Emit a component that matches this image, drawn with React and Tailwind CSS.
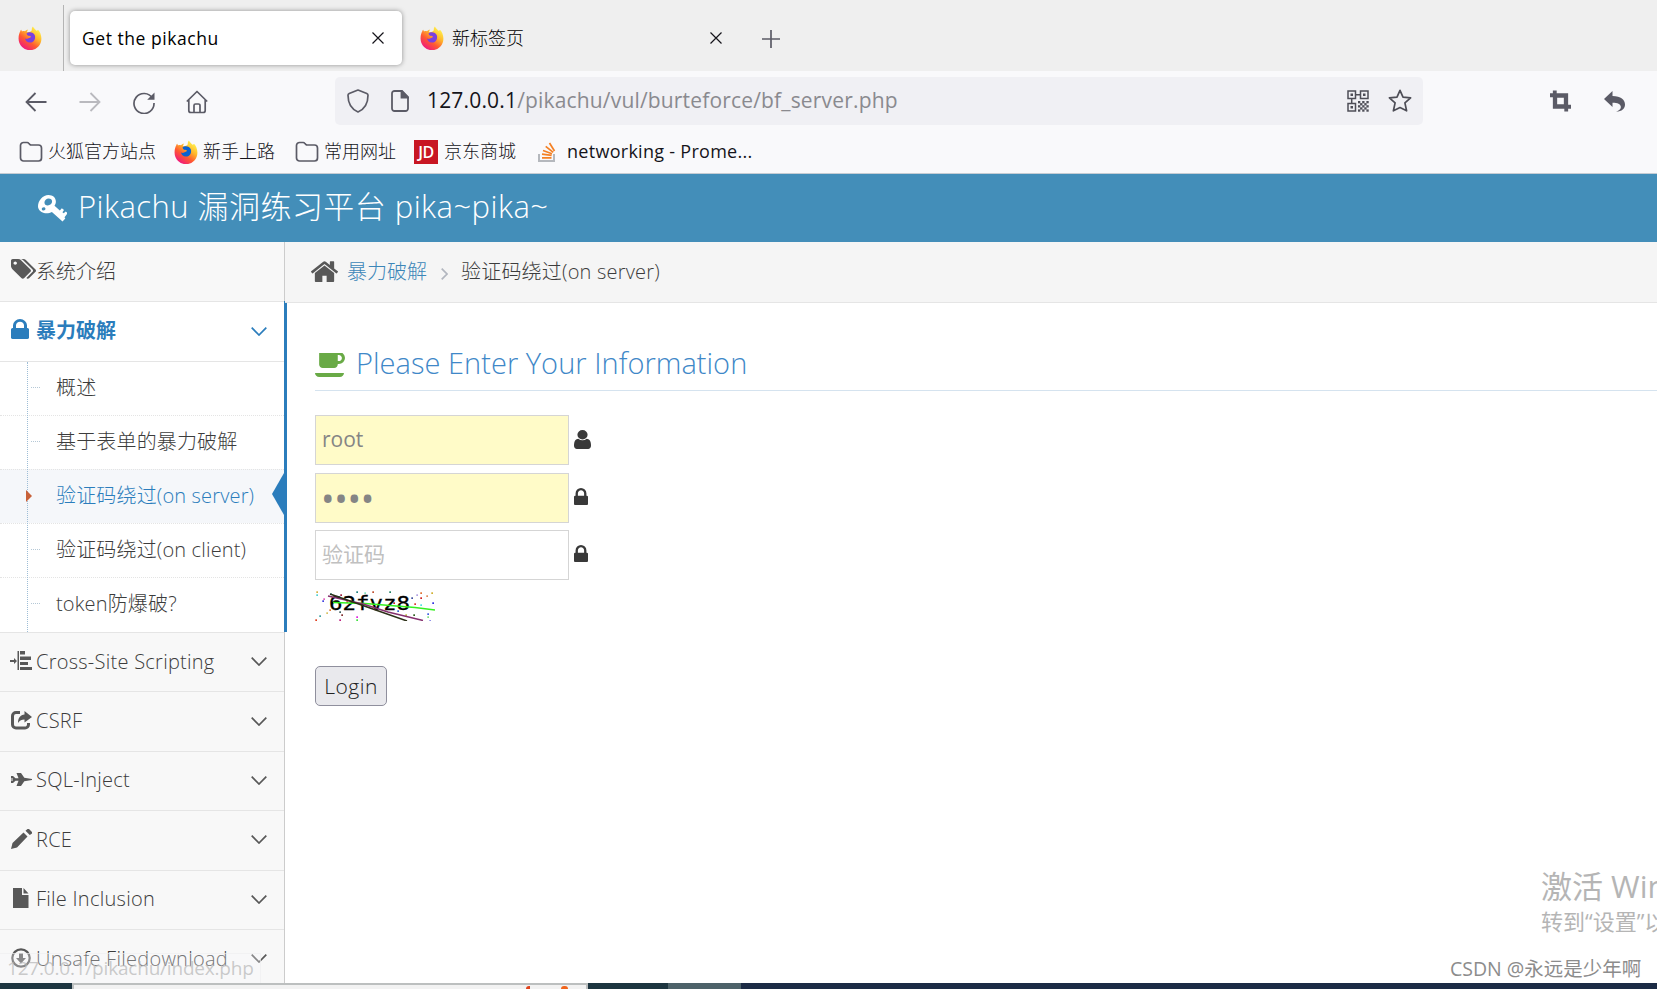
import { useState } from "react";

// Font Awesome glyphs, most of them on the 1792 grid
const PATHS = {
  key: "M10.500 0C15 0 18 2.800 18 6.500c0 1.600-.5 3-1.400 4.300l5.400 4.700 2-2.300 2.200 1.800-1.600 2.200 1.300 1 2-1.800 2 1.800-3.200 4 .8 1.200-2.800 3.200L14 17c-2 1-5 1.800-8 1C2.500 17 0 14.500 0 11.300 0 5.500 5 0 10.500 0zM10.700 3.500C8.500 3.500 6.500 5.300 6.500 7.500c0 1.800 1.300 3 3.300 3 2.400 0 4.400-1.700 4.400-3.900 0-1.800-1.400-3.100-3.500-3.100zM5.800 12.200c-1.100 0-2 .8-2 1.800s.9 1.500 1.900 1.500 1.800-.7 1.800-1.700-.7-1.600-1.700-1.600z",
  tags: "M448 448q0-53-37.5-90.5t-90.5-37.5-90.5 37.5-37.5 90.5 37.5 90.5 90.5 37.5 90.5-37.5 37.5-90.5zm1067 576q0 53-37 90l-491 492q-39 37-91 37-53 0-90-37l-715-716q-38-37-64.5-101t-26.5-117v-416q0-52 38-90t90-38h416q53 0 117 26.5t102 64.5l715 714q37 39 37 91zm384 0q0 53-37 90l-491 492q-39 37-91 37-36 0-59-14t-53-45l470-470q37-37 37-90 0-52-37-91l-715-714q-38-38-102-64.5t-117-26.5h224q53 0 117 26.5t102 64.5l715 714q37 39 37 91z",
  lock: "M640 768h512v-192q0-106-75-181t-181-75-181 75-75 181v192zm832 96v576q0 40-28 68t-68 28h-960q-40 0-68-28t-28-68v-576q0-40 28-68t68-28h32v-192q0-184 132-316t316-132 316 132 132 316v192h32q40 0 68 28t28 68z",
  home: "M1472 992v480q0 26-19 45t-45 19h-384v-384h-256v384h-384q-26 0-45-19t-19-45v-480q0-1 .5-3t.5-3l575-474 575 474q1 2 1 6zm223-69l-62 74q-8 9-21 11h-3q-13 0-21-7l-692-577-692 577q-12 8-24 7-13-2-21-11l-62-74q-8-10-7-23.5t11-21.5l719-599q32-26 76-26t76 26l244 204v-195q0-14 9-23t23-9h192q14 0 23 9t9 23v408l219 182q10 8 11 21.5t-7 23.5z",
  coffee: "M1664 448q0-80-56-136t-136-56h-64v384h64q80 0 136-56t56-136zm-1664 960h1792q0 106-75 181t-181 75h-1280q-106 0-181-75t-75-181zm1856-960q0 159-112.5 271.5t-271.5 112.5h-64v32q0 92-66 158t-158 66h-704q-92 0-158-66t-66-158v-736q0-26 19-45t45-19h1152q159 0 271.5 112.5t112.5 271.5z",
  user: "M1536 1399q0 109-62.5 187t-150.5 78h-854q-88 0-150.5-78t-62.5-187q0-85 8.5-160.5t31.5-152 58.5-131 94-89 134.5-34.5q131 128 313 128t313-128q76 0 134.5 34.5t94 89 58.5 131 31.5 152 8.5 160.5zm-256-887q0 159-112.5 271.5t-271.5 112.5-271.5-112.5-112.5-271.5 112.5-271.5 271.5-112.5 271.5 112.5 112.5 271.5z",
};

function Fa({ name, box = "0 0 1792 1792", className }) {
  return (
    <svg viewBox={box} fill="currentColor" fillRule={name === "key" ? "evenodd" : "nonzero"} preserveAspectRatio="none" className={`shrink-0 ${className}`}>
      <path d={PATHS[name]} />
    </svg>
  );
}

function Firefox({ core = "#7a3fe0", className = "" }) {
  const id = core.slice(1);
  return (
    <svg viewBox="0 0 24 24" className={`w-6 h-6 shrink-0 ${className}`}>
      <defs>
        <linearGradient id={`fx${id}`} x1="0.85" y1="0.1" x2="0.25" y2="0.95">
          <stop offset="0" stopColor="#fff44f" />
          <stop offset="0.35" stopColor="#ffb62c" />
          <stop offset="0.65" stopColor="#ff5a30" />
          <stop offset="1" stopColor="#f0197d" />
        </linearGradient>
      </defs>
      <path
        fill={`url(#fx${id})`}
        d="M14.9.4c1 2 2.200 2.700 3.600 4.300 1.200-.1 1.500-.8 1.700-.6 1.700 1.700 3.200 4.900 3.200 8.500A11.400 11.400 0 0 1 .6 13C.4 10 1.300 7 2.300 5.300c.2-.5.6-1.700.9-1.500.4.7.6 1.300.8 1.600 1.200-.7 2.300-.4 2.900-.2.9-1 2.200-1.700 3.300-1.500-1 1-1.300 1.700-1 2.400 2.500.2 4.900-.8 4.600-2.600-.1-1.200.2-2.300 1.100-3.100z"
      />
      <path fill={core} d="M8.500 7.500c2-2 7-1.700 8.300 1.700 1.200 3.600-1 7.300-4.600 7.400-3 .1-5-1.900-5.100-4.100 1.500.8 3 .4 4.100-.4.700-.5 1.600-.8 1.700-1.400 0-.6-1.600-.7-2.600-.9-.7-.2-1.600-1.300-1.800-2.300z" />
    </svg>
  );
}

function Folder() {
  return (
    <svg viewBox="0 0 24 22" fill="none" stroke="#5b5b66" strokeWidth="1.7" className="w-6 h-[22px] shrink-0">
      <path d="M1.500 4.500a3 3 0 0 1 3-3h3.700a2 2 0 0 1 1.500.7l1.100 1.200a2 2 0 0 0 1.500.6h7.200a3 3 0 0 1 3 3v10a3 3 0 0 1-3 3h-15a3 3 0 0 1-3-3z" />
    </svg>
  );
}

function Close({ className = "" }) {
  return (
    <svg viewBox="0 0 12 12" stroke="#15141a" strokeWidth="1.200" className={`w-3 h-3 ${className}`}>
      <path d="M.5.5l11 11M11.500.5l-11 11" />
    </svg>
  );
}

function TabStrip() {
  return (
    <div className="h-[71px] bg-[#efefef] flex items-center text-[17.5px] text-black">
      <Firefox className="ml-[18px] mt-[4px]" />
      <div className="w-px h-[66px] mt-[5px] bg-[#b4b4b4] ml-[21px]" />
      <div className="ml-[6px] mt-[5px] w-[332px] h-[54px] bg-white rounded-[5px] shadow-[0_0_5px_rgba(0,0,0,0.4)] flex items-center pl-3 pr-[18px]">
        <span className="tracking-[0.55px]">Get the pikachu</span>
        <Close className="ml-auto" />
      </div>
      <Firefox className="ml-[18px] mt-[4px]" />
      <span className="ml-[8px] text-[18px] mt-[6px] font-light">新标签页</span>
      <Close className="ml-[186px] mt-[5px]" />
      <svg viewBox="0 0 18 18" stroke="#5b5b66" strokeWidth="1.700" className="w-[18px] h-[18px] ml-[40px] mt-[6px]">
        <path d="M9 0v18M0 9h18" />
      </svg>
    </div>
  );
}

function QrIcon() {
  const dots = [];
  for (let r = 0; r < 5; r++) {
    for (let c = 0; c < 5; c++) {
      if ((r + c) % 2 === 0) dots.push([11 + c * 2.1, 11 + r * 2.1]);
    }
  }
  return (
    <svg viewBox="0 0 22 22" fill="none" stroke="#4e4e57" strokeWidth="1.500" className="w-[22px] h-[22px]">
      <path d="M1 1h7.500v7.500H1zM13.500 1H21v7.500h-7.500zM1 13.500h7.500V21H1zM8.500 4.700h5M4.700 8.500v5" />
      <g fill="#4e4e57" stroke="none">
        <path d="M3.500 3.500h2.500v2.500H3.500zM16 3.500h2.500v2.500H16zM3.500 16h2.500v2.500H3.500z" />
        {dots.map(([x, y]) => (
          <rect key={`${x}-${y}`} x={x} y={y} width="2.300" height="2.300" />
        ))}
      </g>
    </svg>
  );
}

function NavBar() {
  return (
    <div className="h-[60px] flex items-center pl-[25px] text-[#5b5b66]">
      <svg viewBox="0 0 22 20" fill="none" stroke="currentColor" strokeWidth="1.800" className="w-[22px] h-5 mt-[2px]">
        <path d="M21.500 10H1.500M10.500 1L1.500 10l9 9" />
      </svg>
      <svg viewBox="0 0 22 20" fill="none" stroke="#b9b9be" strokeWidth="1.800" className="w-[22px] h-5 ml-8 mt-[2px]">
        <path d="M.5 10h20M11.500 1l9 9-9 9" />
      </svg>
      <svg viewBox="0 0 22 22" fill="none" stroke="currentColor" strokeWidth="1.700" className="w-[22px] h-[22px] ml-8 mt-[3px]">
        <path d="M19.500 6.200A10 10 0 1 0 21 11" />
        <path d="M21.500.5v7.300h-7.300z" fill="currentColor" stroke="none" />
      </svg>
      <svg viewBox="0 0 22 24" fill="none" stroke="currentColor" strokeWidth="1.700" strokeLinejoin="round" className="w-[22px] h-6 ml-[31px] mt-px">
        <path d="M.8 11.500L11 1.500l10.200 10M2.800 9.800v10.700a2 2 0 0 0 2 2h12.400a2 2 0 0 0 2-2V9.800M8 22.500v-7a1.500 1.500 0 0 1 1.500-1.500h3a1.500 1.500 0 0 1 1.500 1.500v7" />
      </svg>
      <div className="ml-[127px] w-[1088px] h-12 bg-[#f0f0f4] rounded-[5px] flex items-center pl-3 pr-[11px]">
        <svg viewBox="0 0 22 24" fill="none" stroke="currentColor" strokeWidth="1.700" strokeLinejoin="round" className="w-[22px] h-6">
          <path d="M11 1L19.800 4.500q1.200.5 1.200 1.800C21 14 18 20 11 23 4 20 1 14 1 6.300q0-1.300 1.200-1.800z" />
        </svg>
        <svg viewBox="0 0 18 22" fill="none" stroke="currentColor" strokeWidth="1.800" className="w-[18px] h-[22px] ml-[22px]">
          <path d="M3.500 1h7.500l6 6v11.500a2.500 2.500 0 0 1-2.500 2.500h-11A2.500 2.500 0 0 1 1 18.500v-15A2.500 2.500 0 0 1 3.500 1z" />
          <path d="M10.500 1v6.500H17z" fill="currentColor" />
        </svg>
        <span className="ml-[18px] text-[21px] text-[#8a8a8f] tracking-[0.17px]">
          <span className="text-[#15141a]">127.0.0.1</span>/pikachu/vul/burteforce/bf_server.php
        </span>
        <div className="ml-auto flex items-center gap-[19px]">
          <QrIcon />
          <svg viewBox="0 0 24 24" fill="none" stroke="#4e4e57" strokeWidth="1.700" strokeLinejoin="round" className="w-6 h-6">
            <path d="M12 1.300l3 6.900 7.600.7-5.700 5 1.700 7.900-6.600-3.300-6.600 3.300 1.700-7.900-5.700-5L9 8.200z" />
          </svg>
        </div>
      </div>
      <svg viewBox="0 0 22 22" fill="currentColor" className="w-[21px] h-[22px] ml-[127px]">
        <path d="M3 0h4v3h12v12h3v4h-3v3h-4v-3H3V7H0V3h3zM7.500 7.500v7h7v-7z" fillRule="evenodd" />
      </svg>
      <svg viewBox="0 0 21 21" fill="currentColor" className="w-[21px] h-[21px] ml-[33px]">
        <path d="M8.500 0v5C17 5 21 9 21 13.500c0 4-3 7-9 7.300 4-1.500 5-3.300 4.800-5.300-.3-2.400-3-3.800-8.300-3.800V16L0 8z" />
      </svg>
    </div>
  );
}

function Bookmarks() {
  return (
    <div className="h-[42px] pb-px flex items-center pl-[19px] text-[18px] text-[#15141a] font-light">
      <Folder />
      <span className="ml-[5px]">火狐官方站点</span>
      <Firefox core="#0a62d0" className="ml-[18px]" />
      <span className="ml-[5px]">新手上路</span>
      <span className="ml-[20px] flex"><Folder /></span>
      <span className="ml-[5px]">常用网址</span>
      <span className="ml-[18px] w-6 h-6 bg-[#c81623] text-white text-[16px] font-semibold leading-6 text-center tracking-[-0.5px]">JD</span>
      <span className="ml-[6px]">京东商城</span>
      <svg viewBox="0 0 18 20" fill="none" className="w-[18px] h-5 ml-[22px]">
        <path d="M1 12v7h15v-7" stroke="#b5b8bd" strokeWidth="2" />
        <path d="M4 15.800h9.500M4 12.200l9.600 1.200M5 8.500l9 3.200M7.700 4.300l7.500 6M11.500 1l5 8" stroke="#f48024" strokeWidth="1.700" />
      </svg>
      <span className="ml-[11px] text-[18px] font-normal tracking-[0.28px]">networking - Prome...</span>
    </div>
  );
}

const subItems = ["概述", "基于表单的暴力破解", "验证码绕过(on server)", "验证码绕过(on client)", "token防爆破?"];

const menus = [
  {
    label: "Cross-Site Scripting",
    icon: <path d="M0 9h6v2H0zM4 7l3 3-3 3zM7.500 0h1.500v19H7.500zM10 0h5v3.500h-5zM10 5.500h11V9H10zM10 11h8v3h-8zM10 16h12v3H10z" />,
  },
  {
    label: "CSRF",
    icon: (
      <>
        <path d="M10 2.500H6A3.500 3.500 0 0 0 2.500 6v8.500A3.500 3.500 0 0 0 6 18h9a3.500 3.500 0 0 0 3.500-3.500V13" fill="none" stroke="currentColor" strokeWidth="3" />
        <path d="M14.500 1L22 7l-7.500 5.500V9.500c-3 0-4.500.8-6.500 3.500C8 7.500 10.500 5 14.500 4.500z" />
      </>
    ),
  },
  {
    label: "SQL-Inject",
    icon: <path d="M1 7h2l2.500 2.300h3L6.500 4H11l3.300 4.700 7.700 1.300v1L14.300 12.300 11 17H6.500L8.500 11.700h-3L3 14H1v-2.500h2v-.7H1v-.6h2v-.7H1z" />,
  },
  {
    label: "RCE",
    icon: <path d="M1 20l1.500-6L13.500 3.500l4 4L7 18.500zM15.500 1.800L17.500 0H19l3 3v1.500L19.800 6z" />,
  },
  {
    label: "File Inclusion",
    icon: <path d="M3 0h9v7h6.500v13H3zM13.500 0l5 5.500h-5z" />,
  },
  {
    label: "Unsafe Filedownload",
    icon: (
      <>
        <circle cx="11" cy="10" r="8.700" fill="none" stroke="currentColor" strokeWidth="2.200" />
        <path d="M9 5h4v5h3l-5 5.500L6 10h3z" />
      </>
    ),
  },
];

function Chevron() {
  return (
    <svg viewBox="0 0 16 9" fill="none" stroke="currentColor" strokeWidth="1.700" className="w-4 h-[9px] ml-auto mr-[17px] mb-px">
      <path d="M.7.7L8 8 15.300.7" />
    </svg>
  );
}

function Sidebar() {
  const [active, setActive] = useState(2);
  return (
    <div className="w-[287px] shrink-0 text-[20px] text-[#585858] leading-none">
      <div className="w-[285px] h-[59px] bg-[#f8f8f8] border-r border-[#ccc] flex items-center pl-[11px]">
        <Fa name="tags" box="0 128 1900 1536" className="w-[25px] h-[20px] mb-[6px]" />
        <span className="font-light text-[#3c3c3c]">系统介绍</span>
      </div>
      <div className="border-r-3 border-[#2b7dbc] bg-white">
        <div className="h-[61px] border-y border-[#e5e5e5] flex items-center pl-[11px] text-[#2b7dbc] font-bold">
          <Fa name="lock" box="320 128 1152 1408" className="w-[18px] h-[20px] mb-[5px]" />
          <span className="ml-[7px] pb-[2px]">暴力破解</span>
          <Chevron />
        </div>
        <ul className="relative font-light text-[#3c3c3c]">
          {subItems.map((text, i) => (
            <li
              key={text}
              onClick={() => setActive(i)}
              className={`relative h-[54px] first:h-[53px] last-of-type:h-[55px] flex items-center pl-[56px] pb-[2px] tracking-[0.16px] cursor-pointer ${i > 0 ? "border-t border-dotted border-[#e4e4e4]" : ""} ${i === active ? "bg-[#f5f7fa] text-[#2b7dbc]" : ""}`}
            >
              {i !== active && <span className="absolute left-[31px] top-[25px] w-[9px] border-t border-dotted border-[#b5c8d6]" />}
              {text}
              {i === active && (
                <>
                  <svg viewBox="0 0 6 12" className="absolute left-[26px] top-5 w-[6px] h-3 z-10">
                    <path d="M0 0l6 6-6 6z" fill="#c86139" />
                  </svg>
                  <svg viewBox="0 0 12 42" className="absolute right-0 top-[3px] w-3 h-[42px]">
                    <path d="M12 0v42L0 21z" fill="#2b7dbc" />
                  </svg>
                </>
              )}
            </li>
          ))}
          <span className="absolute left-[27px] top-0 bottom-0 border-l border-dotted border-[#9dbdd6]" />
        </ul>
      </div>
      <div className="w-[285px] border-r border-[#ccc]">
        {menus.map((m) => (
          <div key={m.label} className="h-[59.4px] bg-[#f8f8f8] border-t border-[#e5e5e5] flex items-center pl-[10px]">
            <svg viewBox="0 0 22 20" fill="currentColor" className="w-[22px] h-5 shrink-0 mb-[3px]">{m.icon}</svg>
            <span className="ml-1 pb-px font-light text-[#3c3c3c] tracking-[0.26px]">{m.label}</span>
            <Chevron />
          </div>
        ))}
      </div>
    </div>
  );
}

const specks = [
  [2, 1, "#d8b040"], [16, 3, "#40b0b0"], [42, 1, "#208080"], [58, 1, "#c05030"], [75, 1, "#208060"], [106, 2, "#e07030"],
  [117, 2, "#d0b030"], [2, 4, "#50d0d0"], [9, 8, "#e060c0"], [8, 10, "#4040e0"], [15, 19, "#e08040"], [5, 25, "#40a0a0"],
  [1, 29, "#e04020"], [25, 29, "#c02080"], [27, 24, "#803030"], [42, 26, "#e020e0"], [42, 29, "#40e040"], [26, 4, "#a02040"],
  [102, 4, "#b0a0e0"], [106, 7, "#d02020"], [97, 7, "#4050a0"], [100, 13, "#e03030"], [106, 14, "#50e0e0"], [118, 12, "#3030e0"],
  [112, 5, "#e09060"], [99, 24, "#306020"], [113, 23, "#4060e0"], [115, 30, "#6060e0"], [83, 20, "#3060d0"], [79, 12, "#d02020"],
  [91, 24, "#c0c040"], [32, 11, "#e02020"], [50, 2, "#80e0c0"], [12, 22, "#d8c060"], [113, 26, "#80e080"], [25, 21, "#406060"],
];

function Captcha() {
  return (
    <svg viewBox="0 0 120 30" className="w-[120px] h-[30px] mt-[11px] block">
      {specks.map(([x, y, c], i) => (
        <rect key={i} x={x - 0.7} y={y - 0.7} width="1.700" height="1.700" fill={c} />
      ))}
      <text x="14" y="19" textLength="81" lengthAdjust="spacingAndGlyphs" fontSize="19.500" className="font-['DejaVu_Sans_Mono',monospace]" fill="#000" stroke="#000" strokeWidth="0.3">62fvz8</text>
      <path d="M18 11.500l32 1 50 4 20 2.500" stroke="#35f020" strokeWidth="1.600" fill="none" />
      <path d="M13 5l35 8 25 8 35 8.500" stroke="#85306e" strokeWidth="1.500" fill="none" />
      <path d="M15 3l40 14 37 13" stroke="#2c3018" strokeWidth="1.500" fill="none" />
    </svg>
  );
}

function LoginForm() {
  return (
    <form className="pl-[28px] text-[20px]" onSubmit={(e) => e.preventDefault()}>
      <h4 className="h-[88px] border-b border-[#d5e3ef] flex items-center pt-[32px] text-[29px] font-light text-[#3f88c8]">
        <Fa name="coffee" box="0 128 1856 1536" className="w-[30px] h-6 mt-[5px] text-[#69aa46]" />
        <span className="ml-[11px] whitespace-nowrap tracking-[0.03px]">Please Enter Your Information</span>
      </h4>
      <div className="mt-6 flex items-center text-[#393939]">
        <input defaultValue="root" className="w-[254px] h-[50px] border border-[#d5d5d5] bg-[#fffbc8] px-[6px] pb-[2px] text-[21px] text-[#858585] outline-none" />
        <Fa name="user" box="256 128 1280 1536" className="w-[17px] h-[19px] ml-[5px] mb-px" />
      </div>
      <div className="mt-2 flex items-center text-[#393939]">
        <input type="password" defaultValue="root" className="w-[254px] h-[50px] border border-[#d5d5d5] bg-[#fffbc8] pl-[5px] pt-[2px] text-[36px] tracking-[-0.3px] text-[#858585] outline-none" />
        <Fa name="lock" box="320 128 1152 1408" className="w-[14px] h-[17px] ml-[5px] mb-[4px]" />
      </div>
      <div className="mt-[7px] flex items-center text-[#393939]">
        <input placeholder="验证码" className="w-[254px] h-[50px] border border-[#d5d5d5] bg-white px-[6px] pb-[2px] text-[21px] placeholder:text-[#c0c0c0] outline-none" />
        <Fa name="lock" box="320 128 1152 1408" className="w-[14px] h-[17px] ml-[5px] mb-[4px]" />
      </div>
      <Captcha />
      <button className="mt-[45px] w-[72px] h-10 pt-[2px] border border-[#8f8f9d] rounded-[5px] bg-[#e9e9ed] text-[#222] text-[21px] font-light tracking-[0.5px]">Login</button>
    </form>
  );
}

export default function App() {
  return (
    <div className="relative w-[1657px] h-[989px] overflow-hidden bg-[#f9f9fb] flex flex-col font-['Open_Sans','Noto_Sans_CJK_SC',sans-serif]">
      <TabStrip />
      <NavBar />
      <Bookmarks />
      <header className="h-[69px] border-t border-[#c5ccd3] bg-[#438eb9] flex items-center pl-[38px] text-white text-[31px] font-light">
        <Fa name="key" box="0 0 29.200 27" className="w-[29px] h-[27px]" />
        <span className="ml-[11px] pb-[4px] whitespace-nowrap tracking-[0.45px]">Pikachu 漏洞练习平台 pika~pika~</span>
      </header>
      <div className="h-[741px] flex overflow-hidden bg-white">
        <Sidebar />
        <main className="flex-1 min-w-0">
          <nav className="-ml-[2px] h-[61px] bg-[#f5f5f5] border-b border-[#e5e5e5] flex items-center pl-[26px] text-[20px] font-light text-[#3c3c3c]">
            <Fa name="home" box="90 240 1612 1296" className="w-[27px] h-[21px] mb-px text-[#585858]" />
            <a className="ml-[9px] text-[#3c86b8]">暴力破解</a>
            <svg viewBox="0 0 7 12" fill="none" stroke="#b2b6bf" strokeWidth="1.700" className="w-[7px] h-3 ml-[14px] mt-1">
              <path d="M.7.7L6 6 .7 11.300" />
            </svg>
            <span className="ml-[13px] tracking-[0.2px]">验证码绕过(on server)</span>
          </nav>
          <LoginForm />
        </main>
      </div>
      <footer className="h-[6px] flex bg-[#1d3540]">
        <div className="ml-[72px] w-[516px] bg-[#f2f2f2] border-t-2 border-x-2 border-[#bcbfbf] flex">
          <span className="ml-[452px] mt-px w-[4px] h-[3px] bg-[#e0431c] rounded-tl-full" />
          <span className="ml-[31px] mt-px w-[7px] h-[3px] bg-[#f0641c] rounded-t-full" />
        </div>
        <div className="ml-[80px] w-[73px] bg-[#4d6269]" />
        <div className="flex-1 bg-[#1c2b45]" />
      </footer>

      {/* link preview */}
      <div className="absolute left-0 top-[953px] w-[261px] h-[30px] bg-[#f9f9fb]/30 border-t border-r border-[#eee]/60 pl-[7px] text-[19px] tracking-[-0.2px] leading-[29px] text-[#b5b5b5]/70 whitespace-nowrap">127.0.0.1/pikachu/index.php</div>

      {/* desktop watermark */}
      <div className="absolute left-[1541px] top-[866px] w-[116px] overflow-hidden whitespace-nowrap text-[#b5b5b5]">
        <div className="text-[31px] leading-[40px]">激活 Windows</div>
        <div className="text-[22px] leading-[30px]">转到“设置”以激活 Windows。</div>
      </div>
      <div className="absolute left-[1450px] top-[955px] text-[19.500px] leading-7 whitespace-nowrap text-[#8c8c8c]">CSDN @永远是少年啊</div>
    </div>
  );
}
